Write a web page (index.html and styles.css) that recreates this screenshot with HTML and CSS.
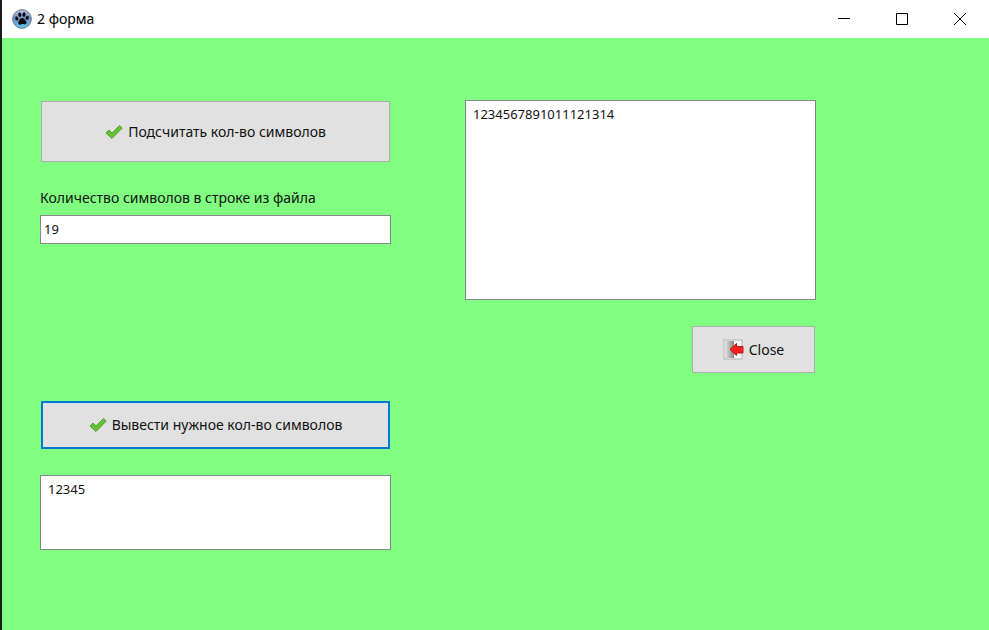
FILE: index.html
```html
<!DOCTYPE html>
<html lang="ru">
<head>
  <meta charset="UTF-8" />
  <meta name="viewport" content="width=device-width, initial-scale=1.0" />
  <title>2 форма</title>
  <link rel="stylesheet" href="styles.css">
</head>
<body>
  <svg class="sprite" aria-hidden="true">
    <symbol id="check" viewBox="0 0 18 16">
      <path d="M1 9 L4 6 L7 9 L14.500 1.500 L17.300 4 L7 14.500 Z" fill="#62c52e" stroke="#5b9a45" stroke-width="1" stroke-linejoin="round" />
    </symbol>
  </svg>

  <div class="window">
    <header class="titlebar">
      <svg class="app-icon" viewBox="0 0 20 20" aria-hidden="true">
        <defs>
          <linearGradient id="ball" x1="0" y1="0" x2="0" y2="1">
            <stop offset="0" stop-color="#b9c4e0" />
            <stop offset="0.5" stop-color="#6f8fbd" />
            <stop offset="1" stop-color="#62cdf5" />
          </linearGradient>
        </defs>
        <circle cx="10" cy="10" r="9.300" fill="url(#ball)" stroke="#66728c" stroke-width="1" />
        <g fill="#080c14">
          <ellipse cx="4.800" cy="9.500" rx="1.500" ry="2.100" transform="rotate(-25 4.800 9.500)" />
          <ellipse cx="7.800" cy="5.800" rx="1.600" ry="2.300" transform="rotate(-8 7.800 5.800)" />
          <ellipse cx="12" cy="5.600" rx="1.600" ry="2.300" transform="rotate(10 12 5.600)" />
          <ellipse cx="15.200" cy="8.800" rx="1.500" ry="2.100" transform="rotate(25 15.200 8.800)" />
          <path d="M10.300 9 C12.300 9 12.800 11 14 12.300 C15.500 14 14 16 12.200 15.300 C11 14.900 10 15 8.900 15.500 C7 16.300 5.500 14.500 6.500 12.800 C7.500 11.200 8.300 9 10.300 9 Z" />
        </g>
      </svg>
      <h1>2 форма</h1>
      <div class="window-buttons">
        <button type="button" aria-label="Свернуть">
          <svg viewBox="0 0 12 12"><path d="M0 5.500 H12" /></svg>
        </button>
        <button type="button" aria-label="Развернуть">
          <svg viewBox="0 0 12 12"><path d="M0.500 0.500 H11.500 V11.500 H0.500 Z" /></svg>
        </button>
        <button type="button" aria-label="Закрыть">
          <svg viewBox="0 0 12 12"><path d="M0 0 L12 12 M12 0 L0 12" /></svg>
        </button>
      </div>
    </header>

    <main class="form">
      <div class="column">
        <button type="button" class="btn btn-tall">
          <svg class="check"><use href="#check" /></svg>
          Подсчитать кол-во символов
        </button>
        <label for="count">Количество символов в строке из файла</label>
        <input type="text" id="count" value="19">
        <button type="button" class="btn btn-wide active">
          <svg class="check"><use href="#check" /></svg>
          Вывести нужное кол-во символов
        </button>
        <textarea class="result" aria-label="Результат">12345</textarea>
      </div>

      <div class="column">
        <textarea class="source" aria-label="Строка из файла">1234567891011121314</textarea>
        <button type="button" class="btn btn-close">
          <svg class="door" viewBox="0 0 21 21" aria-hidden="true">
            <defs>
              <linearGradient id="leaf">
                <stop offset="0" stop-color="#e4e4e4" />
                <stop offset="1" stop-color="#858585" />
              </linearGradient>
            </defs>
            <rect x="1" y="1" width="18" height="19" fill="#f4f4f4" stroke="#b4b4b4" />
            <rect x="2" y="2" width="9" height="17" fill="url(#leaf)" />
            <path d="M7 10.500 L13.500 4.500 V7.500 H20 V14 H13.500 V16.500 Z" fill="#fb2020" stroke="#b81818" stroke-width="1" stroke-linejoin="round" />
          </svg>
          Close
        </button>
      </div>
    </main>
  </div>
</body>
</html>
```
FILE: styles.css
```css
* { margin: 0; padding: 0; box-sizing: border-box; }
body {
  font-family: "Noto Sans", "Open Sans", sans-serif;
  font-size: 14px;
  line-height: 20px;
  color: #111;
  background: #80ff80;
}
.sprite {
  display: none;
}
.window {
  min-height: 100vh;
  border-left: 2px solid #1c1c1c;
}

/* title bar */
.titlebar {
  display: flex;
  align-items: center;
  height: 38px;
  padding-left: 10px;
  background: #fff;
}
.app-icon {
  width: 20px;
  height: 20px;
  margin-right: 5px;
}
h1 {
  font-size: 14px;
  font-weight: 400;
  color: #000;
}
.window-buttons {
  display: flex;
  height: 100%;
  margin-left: auto;
}
.window-buttons button {
  display: flex;
  align-items: center;
  justify-content: center;
  width: 58px;
  border: none;
  background: none;
}
.window-buttons svg {
  width: 12px;
  height: 12px;
  fill: none;
  stroke: #000;
}

/* form */
.form {
  display: grid;
  grid-template-columns: 1fr 1fr;
  gap: 74px;
  padding: 62px 173px 40px 38px;
}
.column {
  display: flex;
  flex-direction: column;
}
.btn {
  display: flex;
  align-items: center;
  justify-content: center;
  gap: 5px;
  margin: 1px;
  border: 1px solid #adadad;
  background: #e1e1e1;
  font: inherit;
  color: #111;
}
.btn.active {
  border: 2px solid #0078d7;
}
.btn-tall {
  height: 61px;
}
.btn-wide {
  height: 48px;
  margin-top: 157px;
}
.btn-close {
  align-self: flex-end;
  width: 123px;
  height: 47px;
  margin-top: 26px;
}
.check {
  width: 18px;
  height: 16px;
}
.door {
  width: 21px;
  height: 21px;
}
label {
  margin: 25px 0 7px;
}
input,
textarea {
  width: 100%;
  border: 1px solid #828790;
  background: #fff;
  font-family: inherit;
  font-size: 13px;
  line-height: 18px;
  color: #111;
  outline: none;
  resize: none;
}
input {
  height: 29px;
  padding: 0 3px 2px;
}
textarea {
  padding: 4px 7px;
}
.result {
  height: 75px;
  margin-top: 25px;
}
.source {
  height: 200px;
}
```
